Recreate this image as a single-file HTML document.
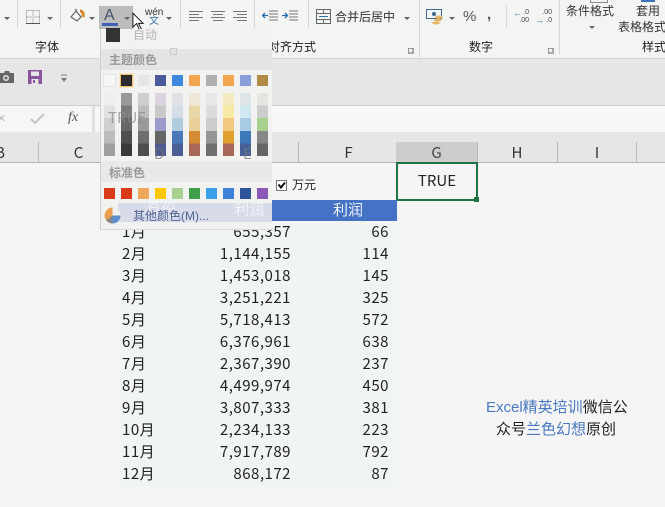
<!DOCTYPE html>
<html><head><meta charset="utf-8">
<style>
html,body{margin:0;padding:0}
body{width:665px;height:507px;position:relative;overflow:hidden;background:#f5f5f5;font-family:"Liberation Sans","Noto Sans CJK SC",sans-serif;color:#222}
.a{position:absolute}
.t{position:absolute;white-space:nowrap;line-height:16px}
.n{position:absolute;white-space:nowrap;font-family:"Noto Sans CJK SC",sans-serif;font-size:15px;line-height:22px;color:#222;text-align:right;letter-spacing:.5px}
.m{left:122px;width:60px;text-align:left;font-size:15px}
.v{left:190px;width:101px}
.p{left:300px;width:89px}
.sep{position:absolute;top:0;width:1px;height:28px;background:#d4d6d4}
.arr{position:absolute;width:0;height:0;border-left:3px solid transparent;border-right:3px solid transparent;border-top:3px solid #666}
.h{position:absolute;top:142px;height:20px;line-height:21px;text-align:center;font-size:15px;color:#333;font-family:"Noto Sans CJK SC",sans-serif}
.b{position:absolute;top:142px;width:1px;height:20px;background:#b9b9b9}
.c{position:absolute;width:11px;height:63px;top:93px}
.s{position:absolute;width:11px;height:11px}
</style></head><body>

<!-- ribbon -->
<div class="a" style="left:0;top:0;width:665px;height:58px;background:#f3f5f3"></div>
<div class="a" style="left:0;top:58px;width:665px;height:1px;background:#d2d2d2"></div>
<!-- grey band -->
<div class="a" style="left:0;top:59px;width:665px;height:46px;background:#e6e6e6"></div>
<!-- formula bar -->
<div class="a" style="left:0;top:105px;width:665px;height:1px;background:#cfcfcf"></div>
<div class="a" style="left:0;top:106px;width:91px;height:26px;background:#f6f6f6"></div>
<div class="a" style="left:96px;top:106px;width:569px;height:26px;background:#f7f7f7"></div>
<div class="a" style="left:0;top:132px;width:665px;height:10px;background:#e6e6e6"></div>

<!-- ribbon icons -->
<div class="arr" style="left:4px;top:17px"></div>
<div class="sep" style="left:17px"></div>
<svg class="a" style="left:26px;top:10px" width="14" height="14" viewBox="0 0 14 14" fill="none" stroke="#888" stroke-dasharray="1 1"><path d="M.5 .5h13v13H.5zM7 .5v13M.5 7h13"/><path d="M0 13.500h14" stroke="#555" stroke-dasharray="none"/></svg>
<div class="arr" style="left:47px;top:17px"></div>
<div class="sep" style="left:60px"></div>
<svg class="a" style="left:68px;top:7px" width="20" height="18" viewBox="0 0 20 18"><path d="M3 10l5-6 5 6-4 4z" fill="none" stroke="#666" stroke-width="1.2"/><path d="M7 2l2 2" stroke="#666" stroke-width="1.2"/><path d="M12 4c2 0 4 2 3 6" stroke="#d88a30" stroke-width="3" fill="none"/></svg>
<div class="arr" style="left:89px;top:17px"></div>
<div class="a" style="left:99px;top:6px;width:34px;height:23px;background:#bcbcbc"></div>
<div class="t" style="left:104px;top:8px;font-size:16px;color:#44546a">A</div>
<div class="a" style="left:102px;top:23px;width:16px;height:3px;background:#3f62b4"></div>
<div class="arr" style="left:124px;top:17px"></div>
<svg class="a" style="left:132px;top:12px" width="13" height="20" viewBox="0 0 14 21"><path d="M1 1v15l4-4 3 7 2-1-3-6h5z" fill="#fff" stroke="#111" stroke-width="1"/></svg>
<div class="t" style="left:145px;top:8px;font-size:10px;line-height:10px;color:#333">wén</div>
<div class="t" style="left:149px;top:16px;font-size:10px;line-height:11px;color:#3a72a8">文</div>
<div class="arr" style="left:166px;top:17px"></div>
<div class="sep" style="left:180px"></div>
<svg class="a" style="left:188px;top:10px" width="60" height="13" viewBox="0 0 60 13" stroke="#777" stroke-width="1" fill="none"><path d="M1 1.5h14M1 4.5h10M1 7.5h14M1 10.5h10M23 1.5h14M25 4.5h10M23 7.5h14M25 10.5h10M45 1.5h14M49 4.5h10M45 7.5h14M49 10.500h10"/></svg>
<div class="sep" style="left:254px"></div>
<svg class="a" style="left:262px;top:9px" width="40" height="15" viewBox="0 0 40 15" fill="none"><path d="M7 2h9M7 5h9M7 8h9M7 11h9M27 2h9M27 5h9M27 8h9M27 11h9" stroke="#777"/><path d="M1 6.5h5M3 4l-2.500 2.500L3 9" stroke="#2a6fae" stroke-width="1.300"/><path d="M20 6.500h5M23 4l2.500 2.500L23 9" stroke="#2a6fae" stroke-width="1.300"/></svg>
<div class="sep" style="left:308px"></div>
<svg class="a" style="left:316px;top:9px" width="16" height="15" viewBox="0 0 16 15" fill="none" stroke="#666"><rect x=".5" y=".5" width="14" height="14"/><path d="M.5 4.500h14M.5 10.500h14M7.500 .5v4M7.500 10.500v4"/><path d="M3 7.500h9" stroke="#2a6fae"/></svg>
<div class="t" style="left:335px;top:9px;font-size:12px;color:#333">合并后居中</div>
<div class="arr" style="left:404px;top:17px"></div>
<div class="sep" style="left:419px;height:57px"></div>
<svg class="a" style="left:426px;top:8px" width="20" height="18" viewBox="0 0 20 18"><rect x=".5" y="1.500" width="15" height="9" fill="#f3f5f3" stroke="#3f6a92"/><circle cx="8" cy="6" r="2" fill="#3f6a92"/><ellipse cx="13" cy="9" rx="4" ry="1.500" fill="#e8b868"/><ellipse cx="12" cy="12" rx="4" ry="1.500" fill="#e8b868"/><ellipse cx="10" cy="15" rx="4" ry="1.500" fill="#e8b868"/></svg>
<div class="arr" style="left:449px;top:17px"></div>
<div class="t" style="left:463px;top:9px;font-size:15px;color:#555">%</div>
<div class="t" style="left:487px;top:7px;font-size:15px;font-weight:bold;color:#555">,</div>
<div class="sep" style="left:506px;top:6px;height:22px"></div>
<div class="t" style="left:514px;top:9px;font-size:7px;line-height:8px;color:#444;text-align:right;width:15px">.0<br>.00</div>
<div class="t" style="left:513px;top:9px;font-size:9px;line-height:9px;color:#2a6fae">←</div>
<div class="t" style="left:537px;top:9px;font-size:7px;line-height:8px;color:#444;text-align:right;width:15px">.00<br>.0</div>
<div class="t" style="left:535px;top:16px;font-size:9px;line-height:9px;color:#2a6fae">→</div>
<div class="sep" style="left:559px;height:54px"></div>
<div class="a" style="left:590px;top:0;width:16px;height:2px;border:1px solid #888;border-top:0"></div>
<div class="t" style="left:566px;top:3px;font-size:12px;color:#333">条件格式</div>
<div class="arr" style="left:589px;top:26px"></div>
<div class="t" style="left:636px;top:3px;font-size:12px;color:#333">套用</div>
<div class="a" style="left:641px;top:0;width:14px;height:2px;background:#3f72b0"></div>
<div class="t" style="left:618px;top:19px;font-size:12px;color:#333">表格格式</div>

<!-- group labels -->
<div class="t" style="left:35px;top:39px;font-size:12px;color:#222">字体</div>
<div class="t" style="left:268px;top:39px;font-size:12px;color:#222">对齐方式</div>
<div class="t" style="left:469px;top:39px;font-size:12px;color:#222">数字</div>
<div class="t" style="left:642px;top:39px;font-size:12px;color:#222">样式</div>
<div class="a" style="left:408px;top:48px;width:5px;height:5px;border-left:1px solid #999;border-top:1px solid #999;box-shadow:inset -2px -2px 0 #aaa"></div>
<div class="a" style="left:548px;top:48px;width:5px;height:5px;border-left:1px solid #999;border-top:1px solid #999;box-shadow:inset -2px -2px 0 #aaa"></div>

<!-- quick access -->
<svg class="a" style="left:0;top:70px" width="14" height="14" viewBox="0 0 14 14"><path d="M0 3h4l1-2h4l1 2h4v10H0z" fill="#666"/><circle cx="6" cy="8" r="3" fill="#e6e6e6"/><circle cx="6" cy="8" r="1.500" fill="#666"/></svg>
<svg class="a" style="left:28px;top:70px" width="14" height="14" viewBox="0 0 14 14"><path d="M0 0h14v14H0z" fill="#8a559c"/><rect x="3" y="1.500" width="8" height="4.500" fill="#e6e6e6"/><rect x="3.500" y="9" width="7" height="5" fill="#e6e6e6"/><rect x="5" y="10" width="2" height="3" fill="#8a559c"/></svg>
<svg class="a" style="left:60px;top:74px" width="8" height="9" viewBox="0 0 8 9"><path d="M1 1h6" stroke="#777"/><path d="M1 4h6L4 8z" fill="#777"/></svg>

<!-- formula icons -->
<div class="t" style="left:-3px;top:111px;font-size:15px;color:#bbb">×</div>
<svg class="a" style="left:30px;top:112px" width="15" height="13" viewBox="0 0 15 13"><path d="M1 7l4 4 9-9" fill="none" stroke="#c4c4c4" stroke-width="2"/></svg>
<div class="t" style="left:68px;top:110px;font:italic 14px/16px 'Liberation Serif',serif;color:#555">fx</div>
<div class="a" style="left:92px;top:106px;width:3px;height:26px;background:#e0e0e0"></div>

<!-- column header -->
<div class="a" style="left:0;top:142px;width:665px;height:20px;background:#e6e6e6"></div>
<div class="a" style="left:396px;top:142px;width:81px;height:20px;background:#cdcdcd"></div>
<div class="a" style="left:0;top:162px;width:665px;height:1px;background:#b5b5b5"></div>
<div class="b" style="left:38px"></div><div class="b" style="left:117px"></div><div class="b" style="left:298px"></div><div class="b" style="left:477px"></div><div class="b" style="left:557px"></div><div class="b" style="left:636px"></div>
<div class="h" style="left:-10px;width:20px">B</div>
<div class="h" style="left:39px;width:79px">C</div>
<div class="h" style="left:299px;width:99px">F</div>
<div class="h" style="left:396px;width:81px;color:#444">G</div>
<div class="h" style="left:477px;width:80px">H</div>
<div class="h" style="left:557px;width:80px">I</div>

<!-- selection -->
<div class="a" style="left:396px;top:162px;width:78px;height:35px;border:2px solid #217346"></div>
<div class="a" style="left:474px;top:197px;width:5px;height:5px;background:#217346"></div>
<div class="t" style="left:396px;top:173px;width:82px;text-align:center;font-family:'Noto Sans CJK SC',sans-serif;font-size:15px;color:#222">TRUE</div>

<!-- checkbox -->
<div class="a" style="left:276px;top:180px;width:9px;height:9px;border:1px solid #777;background:#fff"></div>
<svg class="a" style="left:276px;top:180px" width="11" height="11" viewBox="0 0 11 11"><path d="M2.500 4.500l2.500 3 4-5" fill="none" stroke="#111" stroke-width="2"/></svg>
<div class="t" style="left:292px;top:177px;font-size:12px;color:#222">万元</div>

<!-- table -->
<div class="a" style="left:118px;top:222px;width:279px;height:264px;background:#f1f5f1"></div>
<div class="a" style="left:118px;top:200px;width:279px;height:21px;background:#4472c4"></div>
<div class="t" style="left:333px;top:203px;font-size:15px;color:#f2f4fa">利润</div>

<div class="n m" style="top:221px">1月</div><div class="n v" style="top:221px">655,357</div><div class="n p" style="top:221px">66</div>
<div class="n m" style="top:243px">2月</div><div class="n v" style="top:243px">1,144,155</div><div class="n p" style="top:243px">114</div>
<div class="n m" style="top:265px">3月</div><div class="n v" style="top:265px">1,453,018</div><div class="n p" style="top:265px">145</div>
<div class="n m" style="top:287px">4月</div><div class="n v" style="top:287px">3,251,221</div><div class="n p" style="top:287px">325</div>
<div class="n m" style="top:309px">5月</div><div class="n v" style="top:309px">5,718,413</div><div class="n p" style="top:309px">572</div>
<div class="n m" style="top:331px">6月</div><div class="n v" style="top:331px">6,376,961</div><div class="n p" style="top:331px">638</div>
<div class="n m" style="top:353px">7月</div><div class="n v" style="top:353px">2,367,390</div><div class="n p" style="top:353px">237</div>
<div class="n m" style="top:375px">8月</div><div class="n v" style="top:375px">4,499,974</div><div class="n p" style="top:375px">450</div>
<div class="n m" style="top:397px">9月</div><div class="n v" style="top:397px">3,807,333</div><div class="n p" style="top:397px">381</div>
<div class="n m" style="top:419px">10月</div><div class="n v" style="top:419px">2,234,133</div><div class="n p" style="top:419px">223</div>
<div class="n m" style="top:441px">11月</div><div class="n v" style="top:441px">7,917,789</div><div class="n p" style="top:441px">792</div>
<div class="n m" style="top:463px">12月</div><div class="n v" style="top:463px">868,172</div><div class="n p" style="top:463px">87</div>

<!-- note -->
<div class="t" style="left:486px;top:400px;font-size:15px;color:#222"><span style="color:#4a78c0">Excel精英培训</span>微信公</div>
<div class="t" style="left:496px;top:422px;font-size:15px;color:#222">众号<span style="color:#4a78c0">兰色幻想</span>原创</div>

<!-- popup -->
<div class="a" style="left:100px;top:29px;width:172px;height:201px;background:#f2f3f1;border-left:1px solid #d0d0d0;border-bottom:1px solid #d8d8d8;box-sizing:border-box"></div>
<div class="a" style="left:106px;top:28px;width:14px;height:14px;background:#333"></div>
<div class="t" style="left:133px;top:27px;font-size:12px;color:#b4b4b4">自动</div>
<div class="a" style="left:101px;top:49px;width:171px;height:21px;background:#e4e4e2"></div>
<div class="t" style="left:109px;top:52px;font-size:12px;font-weight:bold;color:#999">主题颜色</div>
<div class="a" style="left:170px;top:48px;width:5px;height:5px;border:1px solid #ccc"></div>

<div class="s" style="left:104px;top:75px;background:#f6f6f6;box-shadow:0 0 0 1px #e4e4e4"></div>
<div class="s" style="left:121px;top:75px;background:#2b2b30;box-shadow:0 0 0 1px #e8c070,0 0 0 2px #fbeacb"></div>
<div class="s" style="left:138px;top:75px;background:#e6e6e6"></div>
<div class="s" style="left:155px;top:75px;background:#4a5a98"></div>
<div class="s" style="left:172px;top:75px;background:#3f88e0"></div>
<div class="s" style="left:189px;top:75px;background:#f4a552"></div>
<div class="s" style="left:206px;top:75px;background:#b0b0b0"></div>
<div class="s" style="left:223px;top:75px;background:#f4a552"></div>
<div class="s" style="left:240px;top:75px;background:#8c9ed8"></div>
<div class="s" style="left:257px;top:75px;background:#b08c48"></div>

<div class="c" style="left:104px;background:linear-gradient(#efefef 20%,#e2e2e2 20% 40%,#d0d0d0 40% 60%,#bcbcbc 60% 80%,#a0a0a0 80%)"></div>
<div class="c" style="left:121px;background:linear-gradient(#999 20%,#7a7a7a 20% 40%,#666 40% 60%,#4e4e4e 60% 80%,#3a3a3a 80%)"></div>
<div class="c" style="left:138px;background:linear-gradient(#cfcfcf 20%,#bdbdbd 20% 40%,#9a9a9a 40% 60%,#6e6e6e 60% 80%,#4e4e4e 80%)"></div>
<div class="c" style="left:155px;background:linear-gradient(#ddd3e0 20%,#c9c9c9 20% 40%,#9c9ccc 40% 60%,#666 60% 80%,#4f5a8f 80%)"></div>
<div class="c" style="left:172px;background:linear-gradient(#e0e2e6 20%,#d4dde6 20% 40%,#b0cde0 40% 60%,#4878b8 60% 80%,#4c5e96 80%)"></div>
<div class="c" style="left:189px;background:linear-gradient(#efe8d8 20%,#e8d8a8 20% 40%,#e8d098 40% 60%,#d48a30 60% 80%,#a86858 80%)"></div>
<div class="c" style="left:206px;background:linear-gradient(#e8e8e8 20%,#dcdcdc 20% 40%,#ccc 40% 60%,#969696 60% 80%,#707070 80%)"></div>
<div class="c" style="left:223px;background:linear-gradient(#f4ecc0 20%,#f6eaa4 20% 40%,#f0c880 40% 60%,#e0a030 60% 80%,#a86858 80%)"></div>
<div class="c" style="left:240px;background:linear-gradient(#dfe4e8 20%,#d0e8f0 20% 40%,#a8cce4 40% 60%,#3f78b8 60% 80%,#486098 80%)"></div>
<div class="c" style="left:257px;background:linear-gradient(#e6e6e0 20%,#ccc 20% 40%,#a8d090 40% 60%,#888 60% 80%,#666 80%)"></div>

<div class="t" style="left:108px;top:110px;font-size:15px;font-family:'Noto Sans CJK SC',sans-serif;color:#8a8a8a;opacity:.75">TRUE</div>
<div class="t" style="left:154px;top:146px;font-size:15px;font-family:'Noto Sans CJK SC',sans-serif;color:#777;opacity:.7">D</div>
<div class="t" style="left:243px;top:146px;font-size:15px;font-family:'Noto Sans CJK SC',sans-serif;color:#777;opacity:.7">E</div>

<div class="a" style="left:101px;top:161px;width:171px;height:21px;background:#e9e9e7"></div>
<div class="t" style="left:109px;top:165px;font-size:12px;font-weight:bold;color:#999">标准色</div>

<div class="s" style="left:104px;top:188px;background:#d83a1a"></div>
<div class="s" style="left:121px;top:188px;background:#d83a1a"></div>
<div class="s" style="left:138px;top:188px;background:#eda85c"></div>
<div class="s" style="left:155px;top:188px;background:#fdc800"></div>
<div class="s" style="left:172px;top:188px;background:#a8d090"></div>
<div class="s" style="left:189px;top:188px;background:#3ea04a"></div>
<div class="s" style="left:206px;top:188px;background:#3aa0e8"></div>
<div class="s" style="left:223px;top:188px;background:#3c82d8"></div>
<div class="s" style="left:240px;top:188px;background:#2f5498"></div>
<div class="s" style="left:257px;top:188px;background:#8c58b8"></div>

<div class="a" style="left:118px;top:203px;width:154px;height:19px;background:#d8dbe8"></div>
<div class="t" style="left:234px;top:203px;font-size:15px;color:#f2f4fa">利润</div>
<div class="t" style="left:146px;top:203px;font-size:15px;color:#eef0f8">月份</div>
<svg class="a" style="left:104px;top:207px" width="17" height="17" viewBox="0 0 16 16"><circle cx="8" cy="8" r="7.500" fill="#e8a050"/><path d="M8 8V.5A7.500 7.500 0 0 1 15.500 8z" fill="#f0f0f0"/><path d="M8 8h7.500A7.500 7.500 0 0 1 8 15.500z" fill="#5a90d0"/><path d="M8 8v7.500A7.500 7.500 0 0 1 2 12.500z" fill="#888"/></svg>
<div class="t" style="left:133px;top:208px;font-size:12px;color:#4e6294">其他颜色(M)...</div>

</body></html>
